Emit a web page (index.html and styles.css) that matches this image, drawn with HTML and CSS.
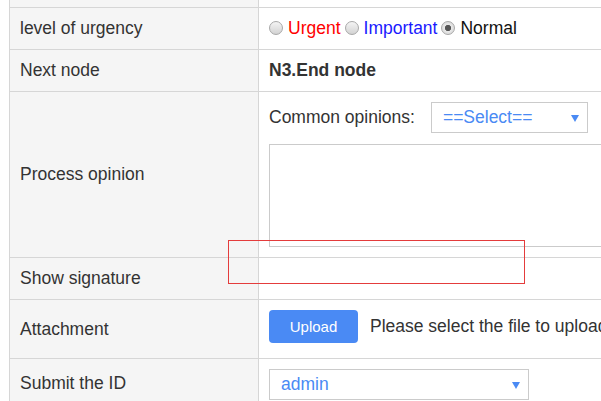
FILE: index.html
```html
<!DOCTYPE html>
<html>
<head>
<meta charset="utf-8">
<link rel="stylesheet" href="styles.css">
</head>
<body>
<div class="page">
  <div class="form">
    <div class="label top"></div><div class="value top"></div>

    <div class="label r42">level of urgency</div>
    <div class="value r42">
      <label class="opt"><input type="radio" name="u" class="radio"><span class="red">Urgent</span></label>
      <label class="opt"><input type="radio" name="u" class="radio"><span class="blue">Important</span></label>
      <label class="opt"><input type="radio" name="u" class="radio" checked><span class="black">Normal</span></label>
    </div>

    <div class="label r42">Next node</div>
    <div class="value r42"><b class="node">N3.End node</b></div>

    <div class="label r166">Process opinion</div>
    <div class="value r166 opinion">
      <div class="common">
        <span>Common opinions:</span>
        <div class="select sel-small"><span>==Select==</span><span class="arrow"></span></div>
      </div>
      <div class="textarea"></div>
    </div>

    <div class="label r42">Show signature</div>
    <div class="value r42"></div>

    <div class="label r59">Attachment</div>
    <div class="value r59 attach">
      <button class="upload">Upload</button>
      <span class="hint">Please select the file to upload</span>
    </div>

    <div class="label r48">Submit the ID</div>
    <div class="value r48 submit">
      <div class="select sel-wide"><span>admin</span><span class="arrow"></span></div>
    </div>
  </div>
  <div class="highlight"></div>
</div>
</body>
</html>
```
FILE: styles.css
```css
html, body {
  margin: 0;
  padding: 0;
  background: #fff;
  overflow: hidden;
}
body {
  font-family: "Liberation Sans", Arial, sans-serif;
  font-size: 17.5px;
  color: #333;
}
.page {
  position: relative;
  width: 601px;
  height: 401px;
  overflow: hidden;
}
.form {
  display: grid;
  grid-template-columns: 249px 600px;
  margin-left: 9px;
  border-left: 1px solid #d6d6d6;
}
.label, .value {
  border-bottom: 1px solid #d6d6d6;
  box-sizing: border-box;
  display: flex;
  align-items: center;
}
.label {
  background: #f5f5f5;
  border-right: 1px solid #d6d6d6;
  padding-left: 10px;
}
.value {
  padding-left: 10px;
}
.top { height: 8px; }
.r42 { height: 42px; }
.r166 { height: 166px; }
.r59 { height: 59px; }
.r48 { height: 50px; }

.opt {
  display: inline-flex;
  align-items: center;
  margin-right: 4px;
}
.radio {
  appearance: none;
  -webkit-appearance: none;
  width: 14px;
  height: 14px;
  margin: 0 5px 0 0;
  border-radius: 50%;
  border: 1px solid #a8a8a8;
  background: linear-gradient(#f4f4f4, #d3d3d3);
  box-sizing: border-box;
  position: relative;
  top: -1px;
}
.radio:checked {
  background: radial-gradient(circle, #555 0, #555 2.8px, #e8e8e8 3.4px, #d2d2d2 100%);
}
.red { color: #ff0000; }
.blue { color: #1a1aff; }
.black { color: #111; }
.node { color: #333; }

.opinion {
  flex-direction: column;
  align-items: flex-start;
  justify-content: flex-start;
  padding-top: 10px;
}
.common {
  display: flex;
  align-items: center;
  height: 31px;
  gap: 16px;
}
.select {
  height: 31px;
  box-sizing: border-box;
  border: 1px solid #cbcbcb;
  display: flex;
  align-items: center;
  justify-content: space-between;
  padding: 0 8px 0 11px;
  color: #4a8af4;
  background: #fff;
}
.sel-small { width: 157px; }
.sel-wide { width: 260px; }
.arrow {
  width: 0;
  height: 0;
  border-left: 4px solid transparent;
  border-right: 4px solid transparent;
  border-top: 7px solid #4a8af4;
  margin-top: 2px;
}
.textarea {
  margin-top: 11px;
  width: 400px;
  height: 103px;
  box-sizing: border-box;
  border: 1px solid #cbcbcb;
}

.attach {
  align-items: flex-start;
  padding-top: 10px;
}
.upload {
  width: 89px;
  height: 33px;
  border: none;
  border-radius: 4px;
  background: #4a8af4;
  color: #fff;
  font-family: "Liberation Sans", Arial, sans-serif;
  font-size: 15px;
  padding: 0;
  margin-right: 12px;
}
.hint {
  line-height: 33px;
  white-space: nowrap;
}
.submit {
  align-items: flex-start;
  padding-top: 10px;
}
.highlight {
  position: absolute;
  left: 228px;
  top: 240px;
  width: 297px;
  height: 44px;
  box-sizing: border-box;
  border: 1px solid #e43c3c;
}
```
